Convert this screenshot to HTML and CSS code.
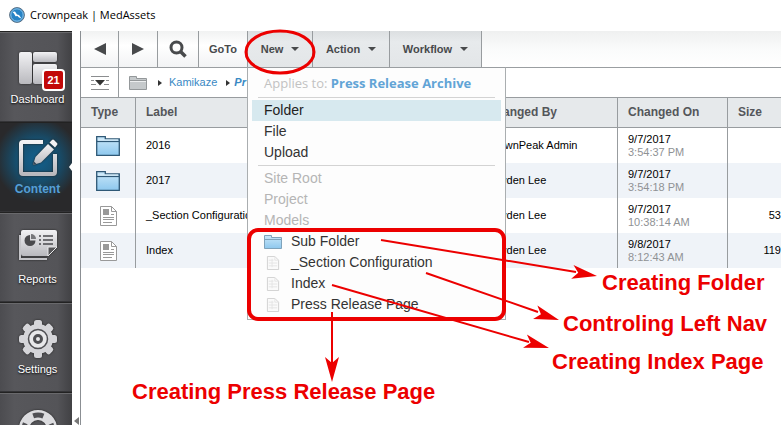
FILE: index.html
```html
<!DOCTYPE html>
<html lang="en">
<head>
<meta charset="utf-8">
<title>Crownpeak | MedAssets</title>
<link rel="stylesheet" href="styles.css">
</head>
<body>
<svg class="defs" aria-hidden="true">
  <defs>
    <linearGradient id="metal" x1="0" y1="0" x2="0" y2="1"><stop offset="0" stop-color="#f2f2f4"/><stop offset="1" stop-color="#b9b9be"/></linearGradient>
    <linearGradient id="blue" x1="0" y1="0" x2="0" y2="1"><stop offset="0" stop-color="#c9e7f9"/><stop offset="1" stop-color="#8ec8ee"/></linearGradient>
    <symbol id="folder" viewBox="0 0 24 20"><path d="M.7 19.3V.7h8.6v2.2h14v16.4z" fill="url(#blue)" stroke="#2f5876" stroke-width="1.3"/><path d="M1 5.5h22" stroke="#2f5876" stroke-width="1.2"/><path d="M2 4h20" stroke="#e4f4fd"/></symbol>
    <symbol id="folder-light" viewBox="0 0 18 14"><path d="M.5 13.500V.5h7v2h10v11z" fill="url(#blue)" stroke="#7fa3bb"/><path d="M1 4.500h16" stroke="#7fa3bb"/></symbol>
    <symbol id="doc" viewBox="0 0 17 20"><path d="M.5.5h11l5 5v14H.5z" fill="#fff" stroke="#999"/><path d="M11.5.5v5h5" fill="none" stroke="#999"/><path d="M3 3h6v6H3z" fill="#999"/><path d="M11 8.500h3M3 11.500h11M3 13.500h11M3 16.500h9" stroke="#999"/></symbol>
    <symbol id="page" viewBox="0 0 13 15"><path d="M.5.5h8l4 4v10H.5z" fill="#fafafa" stroke="#d0d0d0"/><path d="M8.500.5v4h4M2 4.500h5M2 7.500h9M2 10.500h9M5.500 3v9" fill="none" stroke="#e4e4e4"/></symbol>
  </defs>
</svg>
<header class="titlebar">
  <svg width="16" height="16" viewBox="0 0 16 16"><circle cx="8" cy="8" r="7.400" fill="#2783c5" stroke="#5d7184"/><circle cx="8" cy="8" r="6.200" fill="none" stroke="#8cc4ea"/><path d="M3.500 5l2.500-.5 2 3 2 .5 2.500 3.500-2.500-1-1.500-1.500-2 .3-1.500-2.800z" fill="#fff"/></svg>
  <h1>Crownpeak | MedAssets</h1>
</header>
<div class="shell">
  <nav class="side">
    <a class="tile" href="#dashboard">
      <svg class="pic" viewBox="0 0 40 40"><g fill="url(#metal)"><rect x="1" y="4" width="13" height="32" rx="2"/><rect x="15" y="4" width="24" height="10" rx="2"/><rect x="15" y="16" width="24" height="20" rx="2"/></g></svg>
      <b class="badge">21</b><span>Dashboard</span>
    </a>
    <a class="tile current" href="#content">
      <svg class="pic" viewBox="0 1 40 40"><path d="M25 4H5Q3 4 3 6v28q0 2 2 2h30q2 0 2-2V16" fill="none" stroke="url(#metal)" stroke-width="4"/><path d="M15 27l2.500-8L30 6l6 5.500L23 24.500z" fill="url(#metal)"/><path d="M31.500 4.500L34 2q1-1 2 0l3 3q1 1 0 2l-2 2.500z" fill="#f3f3f5"/><path d="M15 27l1-3.500 2.500 2.500z" fill="#345"/></svg>
      <span>Content</span>
    </a>
    <a class="tile" href="#reports">
      <svg class="pic" viewBox="0 5 40 40"><path d="M2 11v24h27" fill="none" stroke="#c4c4c8" stroke-width="2"/><path d="M5 6h32q2 0 2 2v15l-9 9H5q-2 0-2-2V8q0-2 2-2z" fill="url(#metal)"/><path d="M39 23h-9v9z" fill="#555558" stroke="#e8e8ea"/><path d="M12 11a5.500 5.500 0 1 0 5.500 5.500H12z" fill="#4a4a4d"/><path d="M13 10a5 5 0 0 1 5 5h-5z" fill="#77777a"/><path d="M21 12h2M21 16h2M21 20h2M25 12h10M25 16h10M25 20h10" stroke="#4a4a4d" stroke-width="1.500"/></svg>
      <span>Reports</span>
    </a>
    <a class="tile" href="#settings">
      <svg class="pic" viewBox="0 0 40 40"><g fill="#d5d5d9"><circle cx="20" cy="20" r="15"/><g id="teeth"><rect x="16" y="1" width="8" height="38" rx="2.500"/><rect x="1" y="16" width="38" height="8" rx="2.500"/></g><use href="#teeth" transform="rotate(45 20 20)"/></g><circle cx="20" cy="20" r="9.500" fill="#e8e8ea" stroke="#4f4f53" stroke-width="1.500"/><circle cx="20" cy="20" r="3.500" fill="none" stroke="#4f4f53" stroke-width="3"/></svg>
      <span>Settings</span>
    </a>
    <a class="tile" href="#help" aria-label="Help">
      <svg class="pic" viewBox="0 0 40 40"><circle cx="20" cy="20" r="14" fill="none" stroke="#dcdcdf" stroke-width="10"/><circle cx="20" cy="20" r="14" fill="none" stroke="#505054" stroke-width="5" stroke-dasharray="11 11" stroke-dashoffset="5.500" transform="rotate(-90 20 20)"/></svg>
    </a>
  </nav>
  <div class="gutter"><svg width="5" height="8" viewBox="0 0 5 8"><path d="M5 0v8L0 4z" fill="#777"/></svg></div>
  <main>
    <div class="toolbar">
      <button class="w38" aria-label="Back"><svg width="12" height="12" viewBox="0 0 12 12"><path d="M12 0v12L0 6z" fill="#484a4c"/></svg></button>
      <button class="w39" aria-label="Forward"><svg width="12" height="12" viewBox="0 0 12 12"><path d="M0 0v12l12-6z" fill="#484a4c"/></svg></button>
      <button class="w41" aria-label="Search"><svg width="18" height="18" viewBox="0 0 18 18" fill="none" stroke="#484a4c"><circle cx="7.500" cy="7.500" r="5.500" stroke-width="3"/><path d="M11.500 11.500L16.500 16.500" stroke-width="3.500"/></svg></button>
      <button class="w49">GoTo</button>
      <div class="drop">
        <button class="w65 shade">New <i class="caret"></i></button>
        <div class="menu">
          <p>Applies to: <b>Press Release Archive</b></p>
          <ul>
            <li class="hot"><a href="#folder-item">Folder</a></li>
            <li><a href="#file">File</a></li>
            <li><a href="#upload">Upload</a></li>
          </ul>
          <ul class="models">
            <li class="off">Site Root</li>
            <li class="off">Project</li>
            <li class="off">Models</li>
            <li><a href="#sub"><svg width="18" height="14"><use href="#folder-light"/></svg>Sub Folder</a></li>
            <li><a href="#section"><svg width="18" height="14"><use href="#page"/></svg>_Section Configuration</a></li>
            <li><a href="#index"><svg width="18" height="14"><use href="#page"/></svg>Index</a></li>
            <li><a href="#press"><svg width="18" height="14"><use href="#page"/></svg>Press Release Page</a></li>
          </ul>
        </div>
      </div>
      <button class="w77 shade">Action <i class="caret"></i></button>
      <button class="w92 shade">Workflow <i class="caret"></i></button>
    </div>
    <div class="crumbs">
      <button class="w38" aria-label="Collapse"><svg width="18" height="14" viewBox="0 0 18 14"><path d="M0 .5h18M0 4.500h3M15 4.500h3M0 8.500h5M13 8.500h5M0 13.500h18" stroke="#8b8d8f"/><path d="M4 4h10L9 9.500z" fill="#333"/></svg></button>
      <svg width="18" height="14" viewBox="0 0 18 14"><path d="M.5 13.500V.5h7v2h10v11z" fill="#c5c9cb" stroke="#94989a"/><path d="M1 4.500h16" stroke="#94989a"/><path d="M1 5.500h16" stroke="#eceeef"/></svg>
      <i class="sep"></i><a href="#kamikaze">Kamikaze</a><i class="sep"></i><a href="#press-archive"><b>Pr</b></a>
    </div>
    <table>
      <colgroup><col class="c-type"><col class="c-label"><col class="c-by"><col class="c-on"><col></colgroup>
      <thead><tr><th>Type</th><th>Label</th><th>Changed By</th><th>Changed On</th><th>Size</th></tr></thead>
      <tbody>
        <tr><td><svg width="24" height="20"><use href="#folder"/></svg></td><td>2016</td><td>CrownPeak Admin</td><td>9/7/2017<small>3:54:37 PM</small></td><td></td></tr>
        <tr><td><svg width="24" height="20"><use href="#folder"/></svg></td><td>2017</td><td>Hayden Lee</td><td>9/7/2017<small>3:54:18 PM</small></td><td></td></tr>
        <tr><td><svg width="17" height="20"><use href="#doc"/></svg></td><td>_Section Configuration</td><td>Hayden Lee</td><td>9/7/2017<small>10:38:14 AM</small></td><td>53</td></tr>
        <tr><td><svg width="17" height="20"><use href="#doc"/></svg></td><td>Index</td><td>Hayden Lee</td><td>9/8/2017<small>8:12:43 AM</small></td><td>119</td></tr>
      </tbody>
    </table>
  </main>
</div>
<div class="notes">
  <svg width="781" height="425" viewBox="0 0 781 425" fill="none" stroke="#ec0000" stroke-width="3">
    <defs><path id="head" d="M0 0L-25-7-19 0-25 7z" fill="#ec0000" stroke="none"/></defs>
    <ellipse cx="280" cy="52" rx="34" ry="21"/>
    <rect x="249" y="230" width="255" height="89" rx="9" stroke-width="4"/>
    <g stroke-width="2"><path d="M381 240L576 272M426 273L538 312M332 285L529 342M332 312V364"/></g>
    <use href="#head" transform="translate(597 276) rotate(9.500)"/>
    <use href="#head" transform="translate(559 320) rotate(18)"/>
    <use href="#head" transform="translate(549 348) rotate(16)"/>
    <use href="#head" transform="translate(332 382) rotate(90)"/>
  </svg>
  <span class="n-folder">Creating Folder</span>
  <span class="n-nav">Controling Left Nav</span>
  <span class="n-index">Creating Index Page</span>
  <span class="n-press">Creating Press Release Page</span>
</div>
</body>
</html>
```
FILE: styles.css
```css
* { box-sizing: border-box; }
html, body { height: 100%; }
body { margin: 0; position: relative; display: flex; flex-direction: column; overflow: hidden; background: #fff; color: #000; font: 11px/13px "Liberation Sans", Arial, sans-serif; }
a { color: inherit; text-decoration: none; }
button { padding: 0; border: 0; background: none; font: bold 11px/13px "Liberation Sans", Arial, sans-serif; color: #484a4c; }
.defs { position: absolute; width: 0; height: 0; }

.titlebar { flex: none; height: 31px; display: flex; align-items: center; gap: 5px; padding: 0 0 2px 9px; }
.titlebar h1 { margin: 0; font: 11px/16px "Open Sans", "Noto Sans", sans-serif; }

.shell { flex: 1; min-height: 0; display: flex; }
.side { width: 72px; flex: none; overflow: hidden; background: #525256; }
.tile { position: relative; display: flex; flex-direction: column; align-items: center; height: 90px; padding-top: 16px; border-top: 1px solid #222; border-bottom: 1px solid #343437; background: linear-gradient(90deg, #4c4c50, #57575b 20%, #545458 80%, #414144); box-shadow: inset 0 1px #69696c; color: #fff; text-shadow: 0 1px 2px #000; }
.tile:first-child { height: 91px; }
.pic { flex: none; width: 40px; height: 40px; margin-left: 4px; filter: drop-shadow(0 0 1px #222); }
.tile span { margin: 5px 0 0 3px; }
.tile + .tile span { margin-top: 4px; }
.badge { position: absolute; left: 42px; top: 37px; width: 23px; height: 22px; border: 2px solid #fff; border-radius: 4px; background: #c20808; font-size: 11px; line-height: 18px; text-align: center; text-shadow: none; }
.current { background: radial-gradient(circle at 37px 37px, #12618f 0, #174d6b 22px, #29292b 42px); box-shadow: none; color: #559fd6; font-weight: bold; font-size: 12px; text-shadow: none; }
.current::after { content: ""; position: absolute; right: 0; top: 40px; border: 4px solid transparent; border-left-width: 0; border-right: 3px solid #fff; }
.gutter { width: 8px; flex: none; display: flex; align-items: flex-end; padding-left: 2px; }

main { flex: 1; min-width: 0; border-left: 1px solid #8b8f93; }
.toolbar { display: flex; height: 37px; border-bottom: 1px solid #9a9ea1; background: linear-gradient(#eff0f0, #fafbfb 50%, #fff); }
.toolbar button, .crumbs button { height: 100%; display: flex; align-items: center; justify-content: center; border-right: 1px solid #989c9f; }
.toolbar button { background: linear-gradient(#f1f2f2, #fff 40%, #f2f3f4); }
.toolbar .shade { background: linear-gradient(#dcdfe1, #e7eaec 30%, #e3e6e8); gap: 8px; }
.w38 { width: 38px; }
.w39 { width: 39px; }
.w41 { width: 41px; }
.w49 { width: 49px; }
.w65 { width: 65px; }
.w77 { width: 77px; }
.w92 { width: 92px; }
.caret { border: 4px solid transparent; border-top-color: #484a4c; border-bottom: 0; }
.drop { position: relative; }

.menu { position: absolute; z-index: 2; left: -1px; top: 100%; width: 259px; padding: 2px 4px 4px; border: 1px solid #aaaeb0; border-top-color: #9a9ea1; background: #fdfdfd; color: #333; font-size: 14px; line-height: 21px; }
.menu p { margin: 0 6px 2px; padding: 3px 6px; border-bottom: 1px solid #d3d3d3; color: #c2c2c2; font: 13px/21px "Open Sans", "Noto Sans", sans-serif; white-space: nowrap; }
.menu p b { color: #62a4d6; }
.menu ul { margin: 0; padding: 0; list-style: none; }
.menu li { padding: 0 12px; }
.menu li a { display: flex; align-items: center; gap: 9px; }
.menu .hot { background: #d7e9ef; color: #222; }
.menu .off { color: #b5b5b5; }
.models::before { content: ""; display: block; margin: 2px 6px; border-top: 1px solid #d3d3d3; }

.crumbs { display: flex; align-items: center; height: 29px; color: #3989c4; }
.crumbs > svg { margin: 0 11px 0 10px; }
.crumbs b { font-style: italic; }
.sep { border: 3px solid transparent; border-left: 4px solid #333; border-right: 0; }
.crumbs a { margin: 0 9px 0 7px; }
.crumbs a:last-child { margin-left: 4px; }

table { width: 100%; table-layout: fixed; border-collapse: separate; border-spacing: 0; }
.c-type { width: 55px; }
.c-label { width: 341px; }
.c-by { width: 141px; }
.c-on { width: 110px; }
th { height: 31px; padding: 0 10px; border: solid #989c9f; border-width: 1px 1px 1px 0; background: #e6e9eb; color: #54565a; font-size: 12px; text-align: left; }
td { height: 35px; padding: 0 10px; border-right: 1px solid #989c9f; white-space: nowrap; }
th:last-child, td:last-child { border-right: 0; }
td:first-child { padding: 0; text-align: center; }
td:first-child svg { display: block; margin: auto; }
td:last-child { padding: 0; text-align: right; }
tbody tr:nth-child(even) { background: #eff3f8; }
small { display: block; color: #8f9295; font-size: 11px; }

.notes { position: absolute; z-index: 3; left: 0; top: 0; pointer-events: none; color: #ec0000; font-size: 22px; line-height: 26px; font-weight: bold; white-space: nowrap; }
.notes svg { display: block; }
.notes span { position: absolute; }
.n-folder { left: 602px; top: 270px; }
.n-nav { left: 563px; top: 311px; }
.n-index { left: 552px; top: 349px; }
.n-press { left: 132px; top: 379px; }
```
